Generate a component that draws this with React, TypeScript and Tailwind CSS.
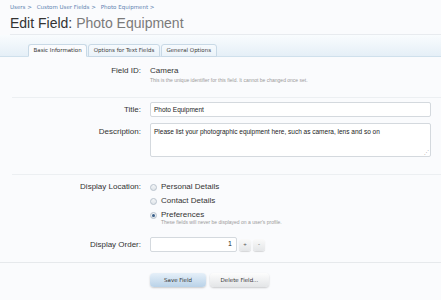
import React from "react";

const crumbs = ["Users", "Custom User Fields", "Photo Equipment"];
const tabs = ["Basic Information", "Options for Text Fields", "General Options"];

function Label({ children }: { children: React.ReactNode }) {
  return <div className="w-[141px] shrink-0 text-right text-[8px] leading-[10px] text-[#333]">{children}</div>;
}

function Radio({ label, checked = false }: { label: string; checked?: boolean }) {
  return (
    <div className="flex h-[14px] items-center gap-[4px]">
      <span className="flex h-[7px] w-[7px] items-center justify-center rounded-full border border-[#b8c2cc] bg-gradient-to-b from-[#f4f6f8] to-[#dfe4e9]">
        {checked ? <span className="h-[3px] w-[3px] rounded-full bg-[#3a5f8a]" /> : null}
      </span>
      <span className="text-[8px] text-[#333]">{label}</span>
    </div>
  );
}

export default function App() {
  return (
    <div className="h-[300px] w-[441px] overflow-hidden bg-[#fafbfd] font-['Liberation_Sans',sans-serif]">
      <div className="flex gap-[5px] pl-[10px] pt-[4px] font-['DejaVu_Sans',sans-serif] text-[5.5px] leading-[7px] text-[#5d83b0]">
        {crumbs.map((c) => (
          <span key={c}>{c} &gt;</span>
        ))}
      </div>
      <h1 className="pl-[10px] pt-[3px] text-[14px] leading-[18px] text-[#333]">
        Edit Field: <span className="text-[#7a7a7a]">Photo Equipment</span>
      </h1>
      <div className="ml-[10px] mt-[2px] h-px bg-[#e8ebef]" />
      <div className="flex h-[22px] items-end border-b border-[#cfe0ec] bg-gradient-to-b from-[#f9fcfe] to-[#e5eff7] pl-[28px] font-['DejaVu_Sans',sans-serif]">
        {tabs.map((t, i) => (
          <div
            key={t}
            className={`-mb-px mr-px flex h-[13px] items-center rounded-t-[3px] border border-[#c8d9e6] px-[4.5px] text-[5.5px] ${
              i === 0 ? "border-b-[#fafbfd] bg-[#fafbfd] text-[#333]" : "bg-gradient-to-b from-[#f6fafd] to-[#ebf3f9] text-[#3b3b3b]"
            }`}
          >
            {t}
          </div>
        ))}
      </div>

      <div className="pt-[9px]">
        <div className="flex items-start gap-[9px]">
          <Label>Field ID:</Label>
          <div>
            <div className="text-[8px] leading-[10px] text-[#333]">Camera</div>
            <div className="mt-[1px] text-[5px] leading-[7px] text-[#9a9a9a]">
              This is the unique identifier for this field. It cannot be changed once set.
            </div>
          </div>
        </div>
        <div className="ml-[12px] mt-[13px] h-px bg-[#eceff2]" />

        <div className="mt-[4px] flex items-center gap-[9px]">
          <Label>Title:</Label>
          <div className="flex h-[15px] w-[281px] items-center rounded-[2px] border border-[#d4d9de] bg-white px-[3px] text-[6.5px] text-[#222]">
            Photo Equipment
          </div>
        </div>
        <div className="mt-[6px] flex items-start gap-[9px]">
          <div className="pt-[4px]">
            <Label>Description:</Label>
          </div>
          <div className="relative h-[34px] w-[281px] rounded-[2px] border border-[#d4d9de] bg-white px-[3px] pt-[3px] text-[6.5px] leading-[9px] text-[#222]">
            Please list your photographic equipment here, such as camera, lens and so on
            <span className="absolute bottom-[1px] right-[1px] text-[5px] leading-[5px] text-[#aaa]">⋰</span>
          </div>
        </div>
        <div className="ml-[12px] mt-[17px] h-px bg-[#eceff2]" />

        <div className="mt-[5px] flex items-start gap-[9px]">
          <div className="pt-[2px]">
            <Label>Display Location:</Label>
          </div>
          <div>
            <Radio label="Personal Details" />
            <Radio label="Contact Details" />
            <Radio label="Preferences" checked />
            <div className="-mt-[3px] pl-[11px] text-[5px] leading-[7px] text-[#9a9a9a]">
              These fields will never be displayed on a user's profile.
            </div>
          </div>
        </div>

        <div className="mt-[11px] flex items-center gap-[9px]">
          <Label>Display Order:</Label>
          <div className="flex items-center gap-[2px]">
            <div className="flex h-[15px] w-[87px] items-center justify-end rounded-[2px] border border-[#d4d9de] bg-white pr-[4px] text-[7px] text-[#222]">
              1
            </div>
            <span className="flex h-[12px] w-[12px] items-center justify-center rounded-[3px] bg-gradient-to-b from-[#fafafa] to-[#e4e6e8] text-[6px] text-[#555] shadow-[0_1px_1px_rgba(0,0,0,0.15)]">
              +
            </span>
            <span className="flex h-[12px] w-[12px] items-center justify-center rounded-[3px] bg-gradient-to-b from-[#fafafa] to-[#e4e6e8] text-[6px] text-[#555] shadow-[0_1px_1px_rgba(0,0,0,0.15)]">
              -
            </span>
          </div>
        </div>
        <div className="mt-[10px] h-px bg-[#e6e9ec]" />

        <div className="mt-[10px] flex gap-[4px] pl-[150px] font-['DejaVu_Sans',sans-serif]">
          <button className="h-[14px] w-[56px] rounded-[4px] bg-gradient-to-b from-[#e6f0f9] to-[#b9d2e8] text-[5.5px] text-[#333] shadow-[0_1px_2px_rgba(0,0,0,0.2)]">
            Save Field
          </button>
          <button className="h-[14px] w-[59px] rounded-[4px] bg-gradient-to-b from-[#fdfdfd] to-[#e3e5e7] text-[5.5px] text-[#333] shadow-[0_1px_2px_rgba(0,0,0,0.2)]">
            Delete Field...
          </button>
        </div>
      </div>
    </div>
  );
}
